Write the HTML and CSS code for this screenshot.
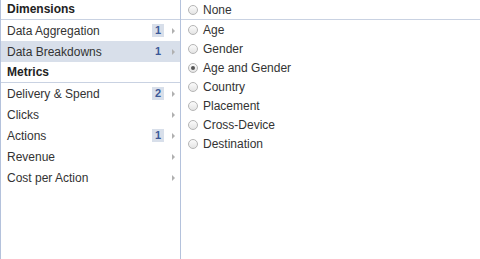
FILE: index.html
```html
<!DOCTYPE html>
<html>
<head>
<meta charset="utf-8">
<link rel="stylesheet" href="styles.css">
</head>
<body>
<div class="panel">
  <div class="left">
    <div class="header">Dimensions</div>
    <div class="row"><span class="label">Data Aggregation</span><span class="badge">1</span><span class="arrow"></span></div>
    <div class="row selected"><span class="label">Data Breakdowns</span><span class="badge">1</span><span class="arrow"></span></div>
    <div class="header tall">Metrics</div>
    <div class="row"><span class="label">Delivery &amp; Spend</span><span class="badge">2</span><span class="arrow"></span></div>
    <div class="row"><span class="label">Clicks</span><span class="arrow"></span></div>
    <div class="row"><span class="label">Actions</span><span class="badge">1</span><span class="arrow"></span></div>
    <div class="row"><span class="label">Revenue</span><span class="arrow"></span></div>
    <div class="row"><span class="label">Cost per Action</span><span class="arrow"></span></div>
  </div>
  <div class="right">
    <div class="option first"><span class="radio"></span>None</div>
    <div class="option"><span class="radio"></span>Age</div>
    <div class="option"><span class="radio"></span>Gender</div>
    <div class="option"><span class="radio checked"></span>Age and Gender</div>
    <div class="option"><span class="radio"></span>Country</div>
    <div class="option"><span class="radio"></span>Placement</div>
    <div class="option"><span class="radio"></span>Cross-Device</div>
    <div class="option"><span class="radio"></span>Destination</div>
  </div>
</div>
</body>
</html>
```
FILE: styles.css
```css
html, body {
  margin: 0;
  padding: 0;
  background: #fff;
}
body {
  font-family: "Liberation Sans", Arial, sans-serif;
  font-size: 12px;
  color: #333;
}
.panel {
  display: flex;
  height: 259px;
  border-left: 1px solid #b4c2dc;
  box-sizing: border-box;
}
.left {
  width: 179px;
  border-right: 1px solid #b4c2dc;
  flex: none;
}
.header {
  height: 19px;
  line-height: 19px;
  font-weight: bold;
  padding-left: 6px;
  border-bottom: 1px solid #c9d2e2;
  color: #222;
}
.header.tall {
  height: 20px;
  line-height: 20px;
}
.row {
  height: 21px;
  display: flex;
  align-items: center;
  padding: 0 5px 0 6px;
}
.row.selected {
  background: #d8dfea;
}
.label {
  flex: 1;
}
.badge {
  font-size: 11px;
  font-weight: bold;
  color: #3b5998;
  background: #d8dfea;
  padding: 0 3px;
  height: 13px;
  line-height: 13px;
  margin-right: 8px;
}
.arrow {
  width: 0;
  height: 0;
  border-left: 3px solid #b0b0b0;
  border-top: 3px solid transparent;
  border-bottom: 3px solid transparent;
}
.right {
  flex: 1;
}
.option {
  height: 19px;
  display: flex;
  align-items: center;
  padding-left: 7px;
}
.option.first {
  border-bottom: 1px solid #c9d2e2;
}
.radio {
  width: 8px;
  height: 8px;
  border-radius: 50%;
  border: 1px solid #b5b5b5;
  background: linear-gradient(#fbfbfb, #e4e4e4);
  margin-right: 5px;
  position: relative;
  flex: none;
}
.radio.checked::after {
  content: "";
  position: absolute;
  left: 2px;
  top: 2px;
  width: 4px;
  height: 4px;
  border-radius: 50%;
  background: #555;
}
```
